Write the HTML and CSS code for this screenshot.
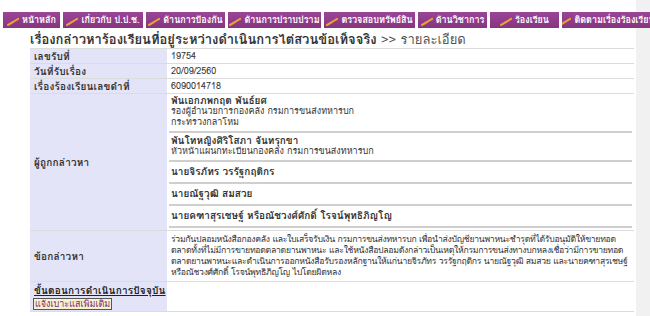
FILE: index.html
```html
<!doctype html>
<html lang="th">
<head>
  <meta charset="utf-8" />
  <meta name="viewport" content="width=device-width,initial-scale=1" />
  <title>รายละเอียดเรื่องกล่าวหา</title>
  <link rel="stylesheet" href="styles.css">
</head>
<body>
  <div class="page">

    <nav class="menu">
      <a class="tab" href="#"><svg class="brush" viewBox="0 0 14 10"><path d="M1 9 C4 8 6 6 13 2" /></svg>หน้าหลัก</a>
      <a class="tab" href="#"><svg class="brush" viewBox="0 0 14 10"><path d="M1 9 C4 8 6 6 13 2" /></svg>เกี่ยวกับ ป.ป.ช.</a>
      <a class="tab" href="#"><svg class="brush" viewBox="0 0 14 10"><path d="M1 9 C4 8 6 6 13 2" /></svg>ด้านการป้องกัน</a>
      <a class="tab" href="#"><svg class="brush" viewBox="0 0 14 10"><path d="M1 9 C4 8 6 6 13 2" /></svg>ด้านการปราบปราม</a>
      <a class="tab" href="#"><svg class="brush" viewBox="0 0 14 10"><path d="M1 9 C4 8 6 6 13 2" /></svg>ตรวจสอบทรัพย์สิน</a>
      <a class="tab" href="#"><svg class="brush" viewBox="0 0 14 10"><path d="M1 9 C4 8 6 6 13 2" /></svg>ด้านวิชาการ</a>
      <a class="tab" href="#"><svg class="brush" viewBox="0 0 14 10"><path d="M1 9 C4 8 6 6 13 2" /></svg>ร้องเรียน</a>
      <a class="tab" href="#"><svg class="brush" viewBox="0 0 14 10"><path d="M1 9 C4 8 6 6 13 2" /></svg>ติดตามเรื่องร้องเรียน</a>
    </nav>

    <div class="content">
      <h1 class="title">เรื่องกล่าวหาร้องเรียนที่อยู่ระหว่างดำเนินการไต่สวนข้อเท็จจริง <span class="crumb">&gt;&gt; รายละเอียด</span></h1>

      <table class="detail">
        <colgroup>
          <col class="col-label">
          <col>
        </colgroup>
        <tr>
          <th>เลขรับที่</th>
          <td>19754</td>
        </tr>
        <tr>
          <th>วันที่รับเรื่อง</th>
          <td>20/09/2560</td>
        </tr>
        <tr>
          <th>เรื่องร้องเรียนเลขดำที่</th>
          <td>6090014718</td>
        </tr>
        <tr>
          <th>ผู้ถูกกล่าวหา</th>
          <td class="nested-cell">
            <div class="person first">
              <div class="pname">พันเอกภพกฤต พันธ์ยศ</div>
              <div class="pos">รองผู้อำนวยการกองคลัง กรมการขนส่งทหารบก</div>
              <div class="pos">กระทรวงกลาโหม</div>
            </div>
            <div class="person">
              <div class="pname">พันโทหญิงศิริโสภา จันทรุกขา</div>
              <div class="pos">หัวหน้าแผนกทะเบียนกองคลัง กรมการขนส่งทหารบก</div>
            </div>
            <div class="person single">
              <div class="pname">นายจิรภัทร วรรัฐกฤติกร</div>
            </div>
            <div class="person single">
              <div class="pname">นายณัฐวุฒิ สมสวย</div>
            </div>
            <div class="person single">
              <div class="pname">นายคฑาสุรเชษฐ์ หรือณัชวงศ์ศักดิ์ โรจน์พุทธิภิญโญ</div>
            </div>
          </td>
        </tr>
        <tr>
          <th>ข้อกล่าวหา</th>
          <td class="para">
            <div>ร่วมกันปลอมหนังสือกองคลัง และใบเสร็จรับเงิน กรมการขนส่งทหารบก เพื่อนำส่งบัญชียานพาหนะชำรุดที่ได้รับอนุมัติให้ขายทอด</div>
            <div>ตลาดทั้งที่ไม่มีการขายทอดตลาดยานพาหนะ และใช้หนังสือปลอมดังกล่าวเป็นเหตุให้กรมการขนส่งทางบกหลงเชื่อว่ามีการขายทอด</div>
            <div>ตลาดยานพาหนะและดำเนินการออกหนังสือรับรองหลักฐานให้แก่นายจิรภัทร วรรัฐกฤติกร นายณัฐวุฒิ สมสวย และนายคฑาสุรเชษฐ์</div>
            <div>หรือณัชวงศ์ศักดิ์ โรจน์พุทธิภิญโญ ไปโดยผิดหลง</div>
          </td>
        </tr>
        <tr class="last">
          <th class="top">
            <a class="step-link" href="#">ขั้นตอนการดำเนินการปัจจุบัน</a>
            <button type="button" class="tip-btn">แจ้งเบาะแสเพิ่มเติม</button>
          </th>
          <td></td>
        </tr>
      </table>
    </div>

  </div>
</body>
</html>
```

FILE: styles.css
```css
:root{
  --tab:#8e3a8c;
  --label:#e4e4f8;
  --line:#dcdcdc;
  --text:#333333;
  font-family: Tahoma, "Loma", "Noto Sans Thai", "DejaVu Sans", sans-serif;
}

body{
  margin:0;
  background:#f1f1f1;
  color:var(--text);
  font-size:9px;
}

.page{
  width:636px;
  min-height:316px;
  background:#ffffff;
  padding-top:12px;
  box-sizing:border-box;
}

/* top menu */
.menu{
  display:grid;
  grid-template-columns: 57px 80px 79px 93px 91px 69px 69px 90px;
  gap:3px;
  padding-left:3px;
  height:16px;
  width:650px;
  overflow:hidden;
}
.tab{
  display:flex;
  align-items:center;
  justify-content:center;
  gap:3px;
  height:16px;
  background:linear-gradient(#9a4597, #86357f);
  color:#ffffff;
  text-decoration:none;
  font-size:9px;
  font-weight:700;
  white-space:nowrap;
  overflow:hidden;
}
.brush{
  width:12px;
  height:9px;
  flex:none;
  margin-top:3px;
}
.brush path{
  fill:none;
  stroke:#f0a030;
  stroke-width:2.4;
  stroke-linecap:round;
}

.content{ padding:0 2px 0 30px; }

.title{
  margin:3px 0 0 0;
  font-size:13px;
  line-height:17px;
  font-weight:700;
  color:#333333;
  white-space:nowrap;
}
.crumb{ font-weight:400; color:#555555; }

/* detail table */
.detail{
  width:604px;
  table-layout:fixed;
  border-collapse:collapse;
}
.col-label{ width:137px; }

.detail > tbody > tr > th,
.detail > tbody > tr > td{
  padding:2px 3px 1px 4px;
  line-height:11px;
  border-top:1px solid var(--line);
  text-align:left;
  vertical-align:middle;
  white-space:nowrap;
  overflow:hidden;
}
.detail > tbody > tr > th{
  background:var(--label);
  font-size:10px;
  font-weight:700;
  letter-spacing:0.2px;
  color:#333333;
}
.detail > tbody > tr > td{ background:#ffffff; font-weight:400; }

.detail > tbody > tr.last > th,
.detail > tbody > tr.last > td{
  border-bottom:1px solid var(--line);
  height:24px;
}
.detail > tbody > tr > th.top{ vertical-align:top; padding-top:3px; }

.detail > tbody > tr > td.para{
  padding-top:3px;
  padding-bottom:3px;
  font-size:8.7px;
  letter-spacing:-0.3px;
}

/* accused list */
.detail > tbody > tr > td.nested-cell{ padding:0 2px 2px 2px; }
.person{
  padding:2px 2px 3px 2px;
  border-bottom:2px solid #cfcfcf;
}
.person.first{ padding-top:1px; }
.person.single{ padding:4px 2px 5px 2px; }
.pname{ font-size:10px; font-weight:700; line-height:11px; }
.pos{ line-height:11px; }

.step-link{
  display:block;
  color:#222222;
  text-decoration:underline;
  line-height:11px;
}
.tip-btn{
  display:block;
  margin:2px 0 0 -1px;
  padding:0 1px;
  font-family:inherit;
  font-size:9px;
  line-height:10px;
  color:#7a2a78;
  background:#f6f1cf;
  border:1px solid #555555;
  border-radius:0;
  cursor:pointer;
}
```
